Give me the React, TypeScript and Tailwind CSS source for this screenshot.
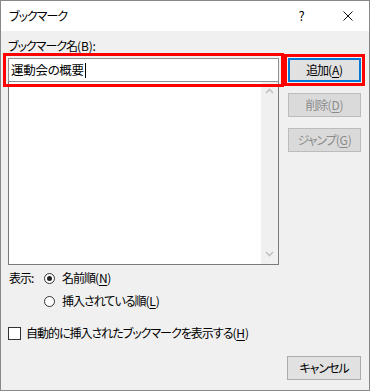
import React from "react";

const font = "font-['Yu_Gothic_UI','Noto_Sans_CJK_JP',sans-serif] [font-feature-settings:'palt'] tracking-[-1px]";

function Key({ k }: { k: string }) {
  return (
    <span className="tracking-[-0.2px]">
      (<span className="underline underline-offset-2">{k}</span>)
    </span>
  );
}

function Chevron({ up }: { up?: boolean }) {
  return (
    <svg width="9" height="6" viewBox="0 0 9 6" className={up ? "" : "rotate-180"}>
      <path d="M1 5 L4.5 1.5 L8 5" fill="none" stroke="#c2c2c2" strokeWidth="1.6" />
    </svg>
  );
}

function Radio({ checked }: { checked?: boolean }) {
  return (
    <span className="w-[11px] h-[11px] rounded-full border border-[#333] bg-white flex items-center justify-center">
      {checked && <span className="w-[5px] h-[5px] rounded-full bg-[#222]" />}
    </span>
  );
}

export default function App() {
  return (
    <div
      className={`w-[370px] h-[391px] border border-[#888888] bg-[#f0f0f0] flex flex-col text-[12px] leading-[14px] text-black ${font}`}
    >
      {/* title bar */}
      <div className="h-[30px] bg-white flex items-center pl-[8px] shrink-0">
        <span className="flex-1">ブックマーク</span>
        <span className="w-[14px] text-center mr-[35px] text-[13px]">?</span>
        <svg width="10" height="10" viewBox="0 0 10 10" className="mr-[16px]">
          <path d="M0.5 0.5 L9.5 9.5 M9.5 0.5 L0.5 9.5" stroke="#111" strokeWidth="1" />
        </svg>
      </div>

      <div className="flex-1 flex flex-col pl-[7px] pr-[7px] pt-[8px]">
        <div className="flex">
          <div className="w-[271px] flex flex-col">
            <div className="h-[14px]">
              ブックマーク名<Key k="B" />:
            </div>
            <div className="mt-[5px] h-[24px] border border-[#8f8f8f] bg-white flex items-center pl-[2px] text-[12.5px] tracking-[-0.3px] outline-[3px] outline-solid outline-[#ff0000] outline-offset-[2px] relative z-10">
              <span>運動会の概要</span>
              <span className="w-px h-[15px] bg-black ml-px" />
            </div>
            <div className="h-[183px] border border-t-0 border-[#7a7a7a] bg-white flex justify-end">
              <div className="w-[17px] bg-[#f0f0f0] flex flex-col items-center justify-between pt-[6px] pb-[7px]">
                <Chevron up />
                <Chevron />
              </div>
            </div>
          </div>

          <div className="ml-[9px] w-[73px] pt-[19px] flex flex-col gap-[11px]">
            <button className="h-[24px] bg-[#e1e1e1] border-2 border-[#0078d7] outline-[3px] outline-solid outline-[#ff0000] outline-offset-[1px]">
              追加<Key k="A" />
            </button>
            <button className="h-[24px] bg-[#dadada] border border-[#bcbcbc] text-[#8a8a8a]">
              削除<Key k="D" />
            </button>
            <button className="h-[24px] bg-[#dadada] border border-[#bcbcbc] text-[#8a8a8a]">
              ジャンプ<Key k="G" />
            </button>
          </div>
        </div>

        <div className="mt-[6px] flex">
          <span className="w-[36px] pl-px">表示:</span>
          <div className="flex flex-col gap-[9px]">
            <div className="flex items-center gap-[7px]">
              <Radio checked />
              <span>
                名前順<Key k="N" />
              </span>
            </div>
            <div className="flex items-center gap-[7px]">
              <Radio />
              <span>
                挿入されている順<Key k="L" />
              </span>
            </div>
          </div>
        </div>

        <div className="mt-[18px] flex items-center gap-[5px]">
          <span className="w-[13px] h-[13px] border border-[#333] bg-white" />
          <span>
            自動的に挿入されたブックマークを表示する<Key k="H" />
          </span>
        </div>

        <div className="mt-[16px] flex justify-end pr-px">
          <button className="w-[74px] h-[24px] bg-[#e1e1e1] border border-[#adadad]">キャンセル</button>
        </div>
      </div>
    </div>
  );
}
